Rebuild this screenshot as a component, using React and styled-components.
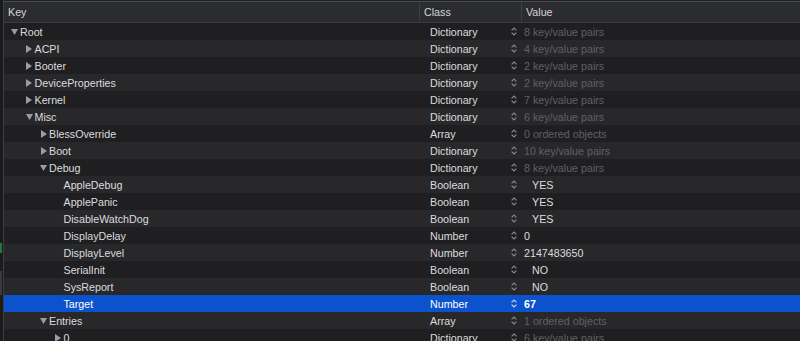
import { createGlobalStyle, styled } from 'styled-components'

const GlobalStyle = createGlobalStyle`
  html, body {
    margin: 0;
    padding: 0;
    background: #1f1f21;
    overflow: hidden;
  }
  body {
    font-family: 'Liberation Sans', Arial, sans-serif;
    font-size: 10.7px;
    color: #dcdcde;
  }
`

const Window = styled.div`
  display: flex;
  width: 800px;
  height: 341px;
  overflow: hidden;
  background: #1f1f21;
`

const SideStrip = styled.div`
  width: 3px;
  flex: none;
  background: #1b1b1d;
  border-right: 1px solid #3d3d40;
  display: flex;
  flex-direction: column;
  padding-top: 243px;
  gap: 18px;
`

const StripMark = styled.div`
  width: 2px;
  height: ${p => p.$h}px;
  flex: none;
  background: ${p => p.$color};
`

const Editor = styled.div`
  flex: 1;
  display: flex;
  flex-direction: column;
  min-width: 0;
`

const Header = styled.div`
  flex: none;
  display: grid;
  grid-template-columns: 415px 102px 1fr;
  height: 20px;
  margin-top: 1px;
  background: #2b2c30;
  border-top: 1px solid #4a4b4e;
  border-bottom: 1px solid #3b3c3f;
`

const HeaderCell = styled.div`
  display: flex;
  align-items: center;
  padding-left: 4px;
  color: #d6d6d8;
  border-left: ${p => (p.$first ? 'none' : '1px solid #3f4043')};
  margin: ${p => (p.$first ? '0' : '1px 0')};
`

const Row = styled.div`
  flex: none;
  display: grid;
  grid-template-columns: 415px 89px 13px 1fr;
  height: 17px;
  align-items: center;
  background: ${p => (p.$selected ? '#0b52cc' : p.$odd ? '#28282b' : '#1f1f21')};
  color: ${p => (p.$selected ? '#ffffff' : '#dcdcde')};
`

const KeyCell = styled.div`
  display: flex;
  align-items: center;
  padding-left: ${p => 7 + p.$level * 14.5}px;
  white-space: nowrap;
`

const Toggle = styled.span`
  display: inline-flex;
  width: 7px;
  margin-right: 2px;
  justify-content: center;
  align-items: center;
  color: #9c9c9f;
`

const ClassCell = styled.div`
  padding-left: 11px;
`

const Stepper = styled.div`
  display: flex;
  align-items: center;
  padding-left: 3px;
  color: ${p => (p.$selected ? '#c9d6f2' : '#8b8b8f')};
`

const ValueCell = styled.div`
  padding-left: ${p => (p.$bool ? 11 : 3)}px;
  color: ${p => (p.$selected ? '#ffffff' : p.$dim ? '#606063' : '#dcdcde')};
  font-weight: ${p => (p.$selected ? 700 : 400)};
  white-space: nowrap;
`

function Triangle({ open }) {
  return open ? (
    <svg width="7" height="6" viewBox="0 0 7 6">
      <polygon points="0,0 7,0 3.5,6" fill="currentColor" />
    </svg>
  ) : (
    <svg width="6" height="8" viewBox="0 0 6 8">
      <polygon points="0,0 6,4 0,8" fill="currentColor" />
    </svg>
  )
}

function Chevrons() {
  return (
    <svg width="6" height="9" viewBox="0 0 6 9" fill="none" stroke="currentColor" strokeWidth="1.1">
      <polyline points="0.6,3.4 3,1 5.4,3.4" />
      <polyline points="0.6,5.6 3,8 5.4,5.6" />
    </svg>
  )
}

const rows = [
  { key: 'Root', level: 0, toggle: 'open', type: 'Dictionary', value: '8 key/value pairs', dim: true },
  { key: 'ACPI', level: 1, toggle: 'closed', type: 'Dictionary', value: '4 key/value pairs', dim: true },
  { key: 'Booter', level: 1, toggle: 'closed', type: 'Dictionary', value: '2 key/value pairs', dim: true },
  { key: 'DeviceProperties', level: 1, toggle: 'closed', type: 'Dictionary', value: '2 key/value pairs', dim: true },
  { key: 'Kernel', level: 1, toggle: 'closed', type: 'Dictionary', value: '7 key/value pairs', dim: true },
  { key: 'Misc', level: 1, toggle: 'open', type: 'Dictionary', value: '6 key/value pairs', dim: true },
  { key: 'BlessOverride', level: 2, toggle: 'closed', type: 'Array', value: '0 ordered objects', dim: true },
  { key: 'Boot', level: 2, toggle: 'closed', type: 'Dictionary', value: '10 key/value pairs', dim: true },
  { key: 'Debug', level: 2, toggle: 'open', type: 'Dictionary', value: '8 key/value pairs', dim: true },
  { key: 'AppleDebug', level: 3, type: 'Boolean', value: 'YES', bool: true },
  { key: 'ApplePanic', level: 3, type: 'Boolean', value: 'YES', bool: true },
  { key: 'DisableWatchDog', level: 3, type: 'Boolean', value: 'YES', bool: true },
  { key: 'DisplayDelay', level: 3, type: 'Number', value: '0' },
  { key: 'DisplayLevel', level: 3, type: 'Number', value: '2147483650' },
  { key: 'SerialInit', level: 3, type: 'Boolean', value: 'NO', bool: true },
  { key: 'SysReport', level: 3, type: 'Boolean', value: 'NO', bool: true },
  { key: 'Target', level: 3, type: 'Number', value: '67', selected: true },
  { key: 'Entries', level: 2, toggle: 'open', type: 'Array', value: '1 ordered objects', dim: true },
  { key: '0', level: 3, toggle: 'closed', type: 'Dictionary', value: '6 key/value pairs', dim: true },
]

export default function App() {
  return (
    <>
      <GlobalStyle />
      <Window>
        <SideStrip>
          <StripMark $h={10} $color="#1f7a3c" />
          <StripMark $h={24} $color="#3a3a3c" />
        </SideStrip>
        <Editor>
          <Header>
            <HeaderCell $first>Key</HeaderCell>
            <HeaderCell>Class</HeaderCell>
            <HeaderCell>Value</HeaderCell>
          </Header>
          {rows.map((r, i) => (
            <Row key={i} $odd={i % 2 === 1} $selected={r.selected}>
              <KeyCell $level={r.level}>
                <Toggle>{r.toggle && <Triangle open={r.toggle === 'open'} />}</Toggle>
                {r.key}
              </KeyCell>
              <ClassCell>{r.type}</ClassCell>
              <Stepper $selected={r.selected}>
                <Chevrons />
              </Stepper>
              <ValueCell $dim={r.dim} $bool={r.bool} $selected={r.selected}>
                {r.value}
              </ValueCell>
            </Row>
          ))}
        </Editor>
      </Window>
    </>
  )
}
